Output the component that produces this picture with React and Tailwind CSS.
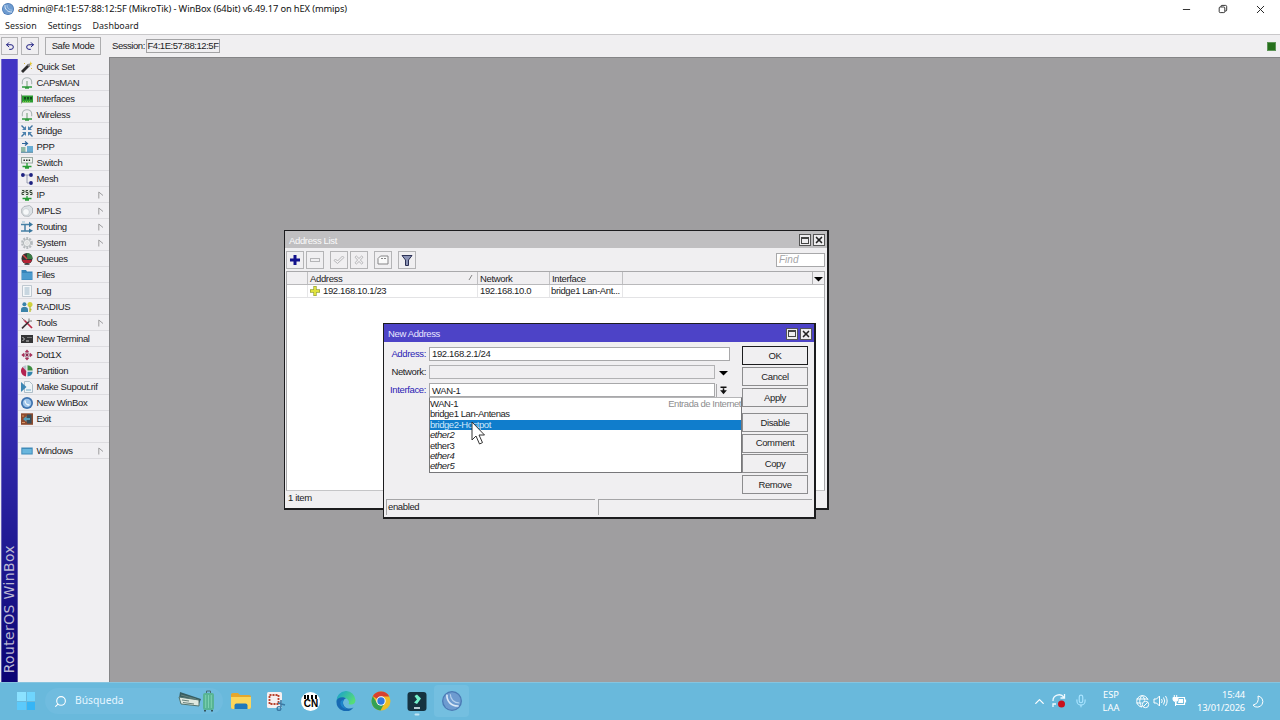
import { Minus, X, Undo2, Search, ChevronUp, Mic } from "lucide-react";

const Svg = ({ children, size = 12, className = "" }) => (
  <svg width={size} height={size} viewBox="0 0 12 12" fill="none" className={`shrink-0 ${className}`}>
    {children}
  </svg>
);

const WinBoxLogo = ({ size = 12 }) => (
  <Svg size={size}>
    <circle cx="6" cy="6" r="6" fill="#4a79b4" />
    <circle cx="6" cy="6" r="5.2" fill="#6d9bd0" />
    <path d="M3 2.2C2.6 6 5.5 9.2 10 9" stroke="#dbe9f7" strokeWidth="1" />
    <path d="M5 2C5 5 7.2 7.2 10.4 7.2" stroke="#b5d0ec" strokeWidth="0.7" />
  </Svg>
);

const Antenna = () => (
  <Svg>
    <path d="M1.3 7.2V5a4.7 4.2 0 0 1 9.4 0v2.2" stroke="#aab4b4" strokeWidth="1.1" />
    <path d="M6 4v6" stroke="#6f9c72" strokeWidth="1" />
    <path d="M1 10h10M4 11h4" stroke="#2f9b3c" strokeWidth="1.3" />
  </Svg>
);

const icons = {
  quick: (
    <Svg>
      <path d="M1 11L8 4" stroke="#2c2c2c" strokeWidth="2.8" />
      <path d="M7 5l2-2" stroke="#888" strokeWidth="2.4" />
      <path d="M9 0l.7 1.7L11.6 2l-1.5 1 .5 2-1.6-1.2" fill="#e2c52e" />
      <path d="M3 2l1 1M10 7l1 1" stroke="#d9b83a" />
    </Svg>
  ),
  antenna: <Antenna />,
  interfaces: (
    <Svg>
      <path d="M.5 1.5v9" stroke="#888" />
      <rect x="1" y="2.5" width="11" height="7" fill="#2b9c31" />
      <path d="M3 4h2v2.6H3zM6 4h2v2.6H6zM9 4h2v2.6H9z" fill="#114d1b" />
      <path d="M2 8.8h8" stroke="#9ed64d" strokeDasharray="1 1" />
    </Svg>
  ),
  bridge: (
    <Svg>
      <path d="M.5.5l4 4M11.5.5l-4 4M.5 11.5l4-4M11.5 11.5l-4-4" stroke="#3f73a1" strokeWidth="1.4" />
      <path d="M5 1v4H1zM7 1v4h4zM5 11V7H1zM7 11V7h4z" fill="#4c82ae" />
    </Svg>
  ),
  ppp: (
    <Svg>
      <path d="M1 2.5h5M4 .5l2.5 2L4 4.5" stroke="#2d659a" strokeWidth="1.2" />
      <rect x="0" y="6" width="4.5" height="5" fill="#8fb9a5" />
      <rect x="6" y="5" width="6" height="6" fill="#69add4" />
      <path d="M0 11.3h12" stroke="#53869f" />
    </Svg>
  ),
  switch: (
    <Svg>
      <rect x=".5" y=".5" width="11" height="5.5" fill="#eef3ee" stroke="#9ba9a2" />
      <path d="M2.5 3.3h7" stroke="#222" strokeWidth="1.4" strokeDasharray="1.4 1.2" />
      <path d="M6 6v4M1.5 9.5h9M4 11h4" stroke="#279d35" strokeWidth="1.3" />
    </Svg>
  ),
  mesh: (
    <Svg>
      <path d="M2 2h7M6 2v8h4" stroke="#8289a2" strokeWidth=".8" />
      <circle cx="1.9" cy="2" r="1.9" fill="#1d2180" />
      <circle cx="10" cy="2" r="1.9" fill="#1d2180" />
      <circle cx="10" cy="10" r="1.9" fill="#1d2180" />
    </Svg>
  ),
  ip: (
    <Svg>
      <rect x=".3" y=".5" width="11.4" height="6" fill="#dfe6dc" />
      <path d="M1 1.5h2v2H1v2h2M7 1.5H5v2h2v2H5M11 1.5H9v2h2v2H9" stroke="#2c3c2e" strokeWidth=".9" />
      <path d="M6 7v3M1.5 9.5h9M4 11h4" stroke="#279d35" strokeWidth="1.3" />
    </Svg>
  ),
  mpls: (
    <Svg>
      <path d="M3 1.5L8.5.5 11.5 3v5L8 11.3 3 11 .7 8V4z" fill="#dde2e6" stroke="#a5abb0" strokeWidth=".8" />
      <circle cx="5" cy="7" r="3.4" fill="#f6f8f9" stroke="#b9c0c5" strokeWidth=".6" />
    </Svg>
  ),
  routing: (
    <Svg>
      <path d="M0 3.5h9M4 3.5v7M0 10h9" stroke="#4580a5" strokeWidth="1.5" />
      <path d="M8 .8l4 2.7-4 2.7zM8 7.4l4 2.3-4 2.3z" fill="#3a779e" />
      <path d="M1 1h3" stroke="#91bdd0" />
    </Svg>
  ),
  system: (
    <Svg>
      <circle cx="6" cy="6" r="4.9" stroke="#b5babd" strokeWidth="2" strokeDasharray="2 1.1" />
      <circle cx="6" cy="6" r="3.6" fill="#eceeee" stroke="#aeb3b5" strokeWidth=".9" />
      <circle cx="6" cy="6" r="1.2" fill="#fff" stroke="#bbb" strokeWidth=".5" />
    </Svg>
  ),
  queues: (
    <Svg>
      <circle cx="6" cy="5.5" r="5.5" fill="#363332" />
      <path d="M6 6V0a5.5 5.5 0 0 1 5.5 6z" fill="#397b43" />
      <path d="M6 6L2 2" stroke="#d54242" strokeWidth="1.5" />
      <path d="M1 7h10l-2 3H3z" fill="#b42435" />
      <path d="M3.5 11.5h5" stroke="#555" />
    </Svg>
  ),
  files: (
    <Svg>
      <path d="M.5 1H5l1 1.6h5.5V11H.5z" fill="#3684b9" />
      <path d="M1 4h10v6.5H1z" fill="#4c9bce" />
    </Svg>
  ),
  log: (
    <Svg>
      <path d="M1.5.5h9v11h-9z" fill="#f4f7f9" stroke="#b1bdc6" strokeWidth=".8" />
      <path d="M3.5 3h5M3.5 5h5M3.5 7h5M3.5 9h5" stroke="#87a4ba" strokeWidth=".8" />
    </Svg>
  ),
  radius: (
    <Svg>
      <circle cx="3.4" cy="3.3" r="2" fill="#3a83a9" />
      <path d="M0 11V8.5C0 6.5 1.5 6 3.4 6S7 6.5 7 8.5V11z" fill="#3a83a9" />
      <circle cx="9" cy="3.5" r="2.5" fill="#cfd13c" />
      <path d="M9 5v6M9 8.5h1.5" stroke="#b9bd31" strokeWidth="1.3" />
    </Svg>
  ),
  tools: (
    <Svg>
      <path d="M3 3l8 8" stroke="#bb2946" strokeWidth="1.7" />
      <path d="M.8.8l3 3" stroke="#888" strokeWidth="1" />
      <path d="M1 11.3L8.5 4" stroke="#3b3135" strokeWidth="1.7" />
      <path d="M8 1.5V4h3" stroke="#999" strokeWidth="1.4" />
    </Svg>
  ),
  terminal: (
    <Svg>
      <rect x="0" y="2" width="12" height="8" fill="#343436" />
      <path d="M1.5 4l2 2-2 2M5 8h3" stroke="#ddd" strokeWidth=".9" />
      <path d="M6 4.5h5" stroke="#777" />
    </Svg>
  ),
  dot1x: (
    <Svg>
      <path d="M6 .5L8.2 3H3.8zM6 11.5L8.2 9H3.8zM.3 6L3 3.8v4.4zM11.7 6L9 3.8v4.4z" fill="#a8325b" />
      <circle cx="6" cy="6" r="2.5" stroke="#a06680" strokeWidth="1" />
      <circle cx="6" cy="6" r="1.4" fill="#8c294e" />
    </Svg>
  ),
  partition: (
    <Svg>
      <path d="M5.3 6L1.5 1.8A6 6 0 0 1 5.3.2z" fill="#b7c4cc" />
      <path d="M5.3 6L1.6 2A5.6 5.6 0 0 0 5 11.5z" fill="#b32350" />
      <path d="M6.5 5.5V.2a5.6 5.6 0 0 1 5.2 5.3z" fill="#3d8d43" />
      <path d="M6.5 6.8h5.2a5.6 5.6 0 0 1-5.2 4.7z" fill="#3484ac" />
    </Svg>
  ),
  supout: (
    <Svg>
      <path d="M3.5.5h5l3 3v8h-8z" fill="#eef4f7" stroke="#9eb1bd" strokeWidth=".8" />
      <path d="M0 1l5.5 5L0 11z" fill="#3d87b4" />
      <path d="M5 9h5" stroke="#73aac8" />
    </Svg>
  ),
  winbox: (
    <Svg>
      <circle cx="6" cy="6" r="6" fill="#3e72ae" />
      <circle cx="6" cy="6" r="4.3" fill="#9cc2e8" />
      <path d="M4 3.5C4 6 6 8 8.5 8" stroke="#f2f8fd" strokeWidth="1.3" />
    </Svg>
  ),
  exit: (
    <Svg>
      <rect x="0" y=".3" width="12" height="11.5" fill="#8e4a2d" />
      <rect x="6" y="1.5" width="4.5" height="9" fill="#374d59" />
      <path d="M2 6l3.5-3v2H9v2H5.5v2z" fill="#4f9cb9" />
      <path d="M1 3h2M1 9.5h3" stroke="#d99263" strokeWidth="1.2" />
    </Svg>
  ),
  windows: (
    <Svg>
      <rect x=".3" y="2.5" width="11.4" height="7" fill="#3f8bb9" />
      <rect x="1.3" y="4" width="9.4" height="4.5" fill="#69b6dd" />
    </Svg>
  ),
};

const menu = [
  { label: "Quick Set", icon: "quick" },
  { label: "CAPsMAN", icon: "antenna" },
  { label: "Interfaces", icon: "interfaces" },
  { label: "Wireless", icon: "antenna" },
  { label: "Bridge", icon: "bridge" },
  { label: "PPP", icon: "ppp" },
  { label: "Switch", icon: "switch" },
  { label: "Mesh", icon: "mesh" },
  { label: "IP", icon: "ip", sub: true },
  { label: "MPLS", icon: "mpls", sub: true },
  { label: "Routing", icon: "routing", sub: true },
  { label: "System", icon: "system", sub: true },
  { label: "Queues", icon: "queues" },
  { label: "Files", icon: "files" },
  { label: "Log", icon: "log" },
  { label: "RADIUS", icon: "radius" },
  { label: "Tools", icon: "tools", sub: true },
  { label: "New Terminal", icon: "terminal" },
  { label: "Dot1X", icon: "dot1x" },
  { label: "Partition", icon: "partition" },
  { label: "Make Supout.rif", icon: "supout" },
  { label: "New WinBox", icon: "winbox" },
  { label: "Exit", icon: "exit" },
  {},
  { label: "Windows", icon: "windows", sub: true },
];

function TitleBar() {
  return (
    <header className="h-[18px] bg-white flex items-center justify-between pl-0.5 pr-[13px]">
      <div className="flex items-center gap-1">
        <WinBoxLogo />
        <span className="font-['Noto_Sans',sans-serif] text-[9.3px] leading-none tracking-[-0.11px] text-[#111] whitespace-nowrap">
          admin@F4:1E:57:88:12:5F (MikroTik) - WinBox (64bit) v6.49.17 on hEX (mmips)
        </span>
      </div>
      <div className="flex items-center gap-[26px] text-[#222]">
        <Minus size={11} strokeWidth={2} />
        <svg width="10" height="10" viewBox="0 0 10 10" fill="none" stroke="currentColor" strokeWidth=".9">
          <rect x="1.2" y="3" width="5.6" height="5.6" rx="1" />
          <path d="M3 3V2.2Q3 1.4 3.8 1.4H7.5Q8.7 1.4 8.7 2.6V6Q8.7 7 7.8 7H6.9" />
        </svg>
        <X size={13} strokeWidth={1.8} />
      </div>
    </header>
  );
}

function MainToolbar() {
  return (
    <div className="h-[23px] bg-[#f0eff1] border-t border-[#c9c8ca] flex items-center pl-px">
      <button className="w-[17px] h-[18px] border border-[#b5b5b7] flex items-center justify-center text-[#1b1b80]">
        <Undo2 size={10} strokeWidth={2.4} />
      </button>
      <button className="ml-[3px] w-[18px] h-[18px] border border-[#b5b5b7] flex items-center justify-center text-[#1b1b80]">
        <Undo2 size={10} strokeWidth={2.4} className="-scale-x-100" />
      </button>
      <button className="ml-[6px] w-[56px] h-[18px] border border-[#adadaf] leading-none">Safe Mode</button>
      <span className="ml-[11px] w-[33px] whitespace-nowrap tracking-[-0.45px]">Session:</span>
      <span className="ml-px w-[74px] h-[14px] border border-[#a3a3a5] leading-[12px] text-center tracking-[-0.45px] whitespace-nowrap">
        F4:1E:57:88:12:5F
      </span>
      <span className="ml-auto mr-1 size-[9px] bg-[#26701c] border border-[#5e9458]" />
    </div>
  );
}

function Sidebar() {
  return (
    <aside className="w-[110px] bg-[#f0eff2] border-r border-[#858587] flex pl-px pt-[2px]">
      <div className="w-[17px] bg-gradient-to-b from-[#4135c4] from-45% to-[#0c0474] flex items-end justify-center pb-[9px] border-x border-[#c5c3e2]/40">
        <span className="[writing-mode:vertical-rl] rotate-180 font-['DejaVu_Sans',sans-serif] text-[14px] leading-[15px] tracking-[0.35px] text-[#b9b7d3] whitespace-nowrap">
          RouterOS WinBox
        </span>
      </div>
      <nav className="flex-1">
        {menu.map((item, i) => (
          <div key={i} className="h-4 flex items-center border-b border-[#dddce0] pl-[3px] pr-[5px]">
            {item.label && (
              <>
                {icons[item.icon]}
                <span className="ml-[3.5px] pt-[2px] whitespace-nowrap">{item.label}</span>
              </>
            )}
            {item.sub && (
              <svg width="6" height="8" viewBox="0 0 6 8" fill="none" className="ml-auto">
                <path d="M.8 7.5V1L5 4.5" stroke="#949496" strokeWidth=".9" />
              </svg>
            )}
          </div>
        ))}
      </nav>
    </aside>
  );
}

function WindowButtons() {
  return (
    <div className="flex gap-[2px]">
      <button className="size-3 bg-[#eeedef] border border-[#555] flex items-center justify-center">
        <span className="w-[8px] h-[7px] border border-t-2 border-[#444]" />
      </button>
      <button className="size-3 bg-[#eeedef] border border-[#555] flex items-center justify-center">
        <X size={10} strokeWidth={4} className="text-[#222] shrink-0" />
      </button>
    </div>
  );
}

function ToolButton({ children, className = "" }) {
  return (
    <button className={`size-[18px] border border-[#b4b4b6] flex items-center justify-center ${className}`}>
      {children}
    </button>
  );
}

function AddressList() {
  return (
    <section className="absolute left-[174px] top-[172px] w-[545px] h-[280px] bg-[#f0eff1] border border-r-2 border-b-2 border-[#1c1c1e] flex flex-col pl-px pr-[2px]">
      <div className="h-[17px] -ml-px -mr-[2px] bg-[#c0bfc1] flex items-center justify-between pl-[4px] pr-[2px] pt-px text-[#fafafa]">
        <span className="pt-[2px]">Address List</span>
        <WindowButtons />
      </div>
      <div className="h-[23px] flex items-center">
        <ToolButton>
          <Svg>
            <path d="M6 1v10M1 6h10" stroke="#11118c" strokeWidth="3" />
          </Svg>
        </ToolButton>
        <ToolButton className="ml-[2px]">
          <Svg>
            <rect x="1.5" y="4.5" width="9" height="3" stroke="#b5b5b7" />
          </Svg>
        </ToolButton>
        <ToolButton className="ml-[6px]">
          <Svg>
            <path d="M1 6.5L2.5 5l2 2 5-5L11 3.5l-6.500 6z" stroke="#b0b0b2" strokeWidth=".9" />
          </Svg>
        </ToolButton>
        <ToolButton className="ml-[2px]">
          <Svg>
            <path
              d="M2 3.2L3.4 2 6 4.5 8.6 2 10 3.2 7.4 6 10 8.8 8.6 10 6 7.5 3.4 10 2 8.8 4.6 6z"
              stroke="#b0b0b2"
              strokeWidth=".9"
            />
          </Svg>
        </ToolButton>
        <ToolButton className="ml-[6px]">
          <Svg>
            <path d="M1 4.5L3.5 2H11v8H1z" fill="#fafafa" stroke="#858587" />
            <path d="M4 4.5h5" stroke="#858587" strokeDasharray="2 1" />
          </Svg>
        </ToolButton>
        <ToolButton className="ml-[6px]">
          <Svg>
            <path d="M1 1.5h10L7.5 6v5.5h-3V6z" fill="#8b93b5" stroke="#2c3155" />
          </Svg>
        </ToolButton>
        <span className="ml-auto w-[49px] h-[14px] bg-white border border-[#a8a8aa] leading-[12px] pl-[2px] italic text-[10px] text-[#a5a5a7] tracking-normal">
          Find
        </span>
      </div>
      <div className="flex-1 bg-white border border-[#a9a9ab] border-b-[#c5c5c7]">
        <div className="h-[13px] bg-[#f0eff1] border-b border-[#b9b9bb] flex leading-[14px]">
          <span className="w-[21px] border-r border-[#c0c0c2]" />
          <span className="w-[170px] border-r border-[#c0c0c2] pl-[2px] pr-1 flex justify-between">
            Address
            <svg width="5" height="7" viewBox="0 0 5 7" className="mt-[2px]">
              <path d="M1 6L4 1" stroke="#777" strokeWidth=".9" />
            </svg>
          </span>
          <span className="w-[72px] border-r border-[#c0c0c2] pl-[2px]">Network</span>
          <span className="w-[73px] border-r border-[#c0c0c2] pl-[2px]">Interface</span>
          <span className="flex-1 border-r border-[#b0b0b2]" />
          <span className="w-[11px] flex items-center justify-center">
            <Svg size={9}>
              <path d="M0 4h12L6 10z" fill="#000" />
            </Svg>
          </span>
        </div>
        <div className="h-[13px] border-b border-[#e3e3e5] flex leading-[12px]">
          <span className="w-[21px] border-r border-[#e6e6e8]" />
          <span className="w-[170px] border-r border-[#e6e6e8] pl-[2px] flex items-center gap-[3px]">
            <Svg size={10}>
              <path d="M6 0v12M0 6h12" stroke="#9ba637" strokeWidth="4" />
              <path d="M6 1v10M1 6h10" stroke="#dfe23e" strokeWidth="2.4" />
            </Svg>
            192.168.10.1/23
          </span>
          <span className="w-[72px] border-r border-[#e6e6e8] pl-[2px]">192.168.10.0</span>
          <span className="w-[73px] border-r border-[#e6e6e8] pl-px tracking-[-0.38px] whitespace-nowrap">
            bridge1 Lan-Ant...
          </span>
        </div>
      </div>
      <div className="h-[17px] pl-[2px] leading-[14px]">1 item</div>
    </section>
  );
}

const interfaces = [
  { name: "WAN-1", note: "Entrada de Internet" },
  { name: "bridge1 Lan-Antenas" },
  { name: "bridge2-Hostpot", active: true },
  { name: "ether2", off: true },
  { name: "ether3" },
  { name: "ether4", off: true },
  { name: "ether5", off: true },
];

function InterfaceDropdown() {
  return (
    <ul className="absolute left-[45px] top-[73px] w-[313px] h-[76px] bg-white border border-[#77777a] border-t-[#b5b5b7] pt-px tracking-[-0.45px]">
      {interfaces.map((row) => (
        <li
          key={row.name}
          className={`h-[10.4px] leading-[10.4px] flex justify-between whitespace-nowrap ${
            row.active ? "bg-[#107dcc] text-[#cfe8fa]" : "text-[#1c1c1e]"
          } ${row.off ? "italic" : ""}`}
        >
          <span>{row.name}</span>
          {row.note && <span className="text-[#8d8d8f]">{row.note}</span>}
        </li>
      ))}
    </ul>
  );
}

function DialogButton({ children, main }) {
  return (
    <button
      className={`h-[19px] w-full border leading-none ${
        main ? "border-[#1c1c1e]" : "border-[#8c8c8e]"
      }`}
    >
      {children}
    </button>
  );
}

function FieldRow({ label, required, children }) {
  return (
    <div className="h-[14px] flex items-center">
      <label className={`w-[39px] leading-[14px] text-right ${required ? "text-[#2b22b4]" : ""}`}>{label}</label>
      {children}
    </div>
  );
}

function NewAddress() {
  return (
    <section className="absolute left-[273px] top-[265px] w-[433px] h-[196px] bg-[#f0eff1] border border-r-2 border-b-2 border-[#1c1c1e] flex flex-col">
      <div className="h-[18px] bg-[#4d43c7] flex items-center justify-between pl-1 pr-[2px] pt-px text-[#e8e6ff]">
        <span className="pt-px">New Address</span>
        <WindowButtons />
      </div>
      <div className="h-[156px] flex pl-[3px] pr-[6px] pt-[4px]">
        <div className="flex flex-col gap-1 pt-px">
          <FieldRow label="Address:" required>
            <span className="ml-[3px] w-[301px] h-[14px] bg-white border border-[#a8a8aa] leading-[12px] pl-[2px]">
              192.168.2.1/24
            </span>
          </FieldRow>
          <FieldRow label="Network:">
            <span className="ml-[3px] w-[286px] h-[14px] border border-[#b2b2b4]" />
            <Svg size={9} className="ml-1">
              <path d="M0 4h12L6 10z" fill="#000" />
            </Svg>
          </FieldRow>
          <FieldRow label="Interface:" required>
            <span className="ml-[3px] w-[286px] h-[14px] bg-white border border-[#a8a8aa] leading-[13px] pl-[2px]">
              WAN-1
            </span>
            <span className="ml-px w-[13px] h-[13px] border-l border-[#a8a8aa] flex items-center justify-center">
              <Svg size={9}>
                <path d="M2 1.5h8M6 3v4" stroke="#111" strokeWidth="2" />
                <path d="M1.5 5.5h9L6 11z" fill="#111" />
              </Svg>
            </span>
          </FieldRow>
        </div>
        <div className="ml-auto w-[66px] h-[148px] flex flex-col justify-between">
          <div className="flex flex-col gap-[2px]">
            <DialogButton main>OK</DialogButton>
            <DialogButton>Cancel</DialogButton>
            <DialogButton>Apply</DialogButton>
          </div>
          <div className="h-[81px] flex flex-col justify-between">
            <DialogButton>Disable</DialogButton>
            <DialogButton>Comment</DialogButton>
            <DialogButton>Copy</DialogButton>
            <DialogButton>Remove</DialogButton>
          </div>
        </div>
      </div>
      <div className="flex-1 flex gap-[3px] px-[2px] pb-[2px] pt-px leading-[14px]">
        <span className="w-[209px] border-t border-l border-[#a5a5a7] pl-px">enabled</span>
        <span className="flex-1 border-t border-l border-[#a5a5a7]" />
      </div>
      <InterfaceDropdown />
    </section>
  );
}

function Cursor() {
  return (
    <svg width="14" height="24" viewBox="0 0 14 24" className="absolute left-[361px] top-[363px]">
      <path d="M1 1v18l4-4 3.5 8 3-1.4L8 14h5.5z" fill="#fff" stroke="#333" strokeWidth="1" />
    </svg>
  );
}

const apps = [
  <svg width="22" height="20" viewBox="0 0 22 20">
    <path d="M1 3.5Q1 2 3 2h5l2 2h9q2 0 2 2v10q0 1.5-2 1.5H3q-2 0-2-1.5z" fill="#e5a72c" />
    <path d="M1 6h20v10q0 2-2 2H3q-2 0-2-2z" fill="#fbd65b" />
    <path d="M4.5 18v-3.5q0-2 2-2h9q2 0 2 2V18z" fill="#1f78bb" />
  </svg>,
  <svg width="22" height="22" viewBox="0 0 22 22" fill="none">
    <rect x="2" y="2" width="15" height="16" rx="1.5" fill="#f6eff0" />
    <rect x="4.5" y="5" width="9" height="9" stroke="#b9422d" strokeWidth="1.8" strokeDasharray="2 1" />
    <path d="M13 13l7 2M16 10v7" stroke="#3979a4" strokeWidth="1.6" />
    <circle cx="14" cy="18.5" r="1.9" stroke="#3979a4" strokeWidth="1.3" />
  </svg>,
  <div className="size-[19px] rounded-full bg-white text-black flex flex-col items-center justify-center overflow-hidden">
    <span className="w-[13px] h-[4px] border-y-2 border-dotted border-black" />
    <span className="font-['Liberation_Sans',sans-serif] text-[10px] font-bold leading-[9px] tracking-normal">CN</span>
  </div>,
  <svg width="20" height="20" viewBox="0 0 20 20">
    <defs>
      <linearGradient id="edge" x1="0" y1="0" x2="1" y2=".6">
        <stop stopColor="#159bd5" />
        <stop offset="1" stopColor="#56dd77" />
      </linearGradient>
    </defs>
    <path d="M.5 10A9.5 9.5 0 0 1 19.5 9c0 4-3.5 5.5-7 4 .8-1 .8-3-.8-4.5C9 6 4 6 .5 10z" fill="url(#edge)" />
    <path d="M.5 10C1 6.5 7 5 10 7.5 6.5 8.5 6 13 9 16c2.5 2 6 2 8.500.5A9.5 9.5 0 0 1 .5 10z" fill="#1669b3" />
    <path d="M8 8.5c-2 3-1.5 7 3 9.5-5-.2-8-5-6-8 1-1 2-1.5 3-1.5z" fill="#1c84cb" />
  </svg>,
  <svg width="20" height="20" viewBox="0 0 20 20">
    <circle cx="10" cy="10" r="9.5" fill="#eebe25" />
    <path d="M10 10L1.8 5.2A9.5 9.5 0 0 1 18.3 5.5H10z" fill="#d7402f" />
    <path d="M1.8 5.2A9.5 9.5 0 0 0 9.5 19.5L13.5 12 6 12z" fill="#33a154" />
    <circle cx="10" cy="10" r="4.7" fill="#fff" />
    <circle cx="10" cy="10" r="3.7" fill="#3279dd" />
  </svg>,
  <svg width="20" height="26" viewBox="0 0 20 26" className="mt-[5px]">
    <rect x=".5" y="1" width="19" height="19" rx="3" fill="#163240" />
    <path d="M7.5 5L10 3.5l4 4-4 5.5-3-1.5 3-3z" fill="#73f0cb" />
    <rect x="7" y="16" width="6" height="2" fill="#b9ccd4" />
    <rect x="7.5" y="22.5" width="5" height="2" rx="1" fill="#c2e6f5" />
  </svg>,
  <WinBoxLogo size={20} />,
];

function Taskbar() {
  return (
    <footer className="h-[38px] pb-px bg-[#69b9dc] border-t border-[#86c4df] flex items-center justify-between pl-[17px] pr-[14px] font-['Noto_Sans',sans-serif] tracking-normal text-white">
      <div className="flex items-center">
        <div className="grid grid-cols-2 gap-px size-[18px]">
          <span className="bg-[#8be2ff]" />
          <span className="bg-[#6fd5fd]" />
          <span className="bg-[#5ccafb]" />
          <span className="bg-[#36b5f5]" />
        </div>
        <div className="ml-[10px] w-[178px] h-[26px] rounded-full bg-[#70bcdf] flex items-center pl-[9px] pr-[8px]">
          <Search size={13} strokeWidth={2} className="-scale-x-100 shrink-0" />
          <span className="ml-[8px] text-[10.3px] text-[#e6f6ff]">Búsqueda</span>
          <svg width="38" height="22" viewBox="0 0 38 22" className="ml-auto shrink-0" fill="none">
            <path d="M3 2l21 7-2 5L2 9z" fill="#365d60" />
            <path d="M2 7l20 3v6L4 14z" fill="#dfe8df" stroke="#53746f" />
            <path d="M5 10l7 1M6 12.500l11 1.5M4 5l15 4" stroke="#67817b" strokeWidth="1.2" />
            <path d="M29.5 4V1h4v3" stroke="#496e74" />
            <rect x="26" y="3" width="11" height="17" rx="2" fill="#58b494" />
            <path d="M28.7 5v13M31.5 5v13M34.3 5v13" stroke="#7dd2b1" />
            <path d="M27 20.8h2M34 20.8h2" stroke="#34545c" strokeWidth="1.4" />
          </svg>
        </div>
        <div className="flex">
          {apps.map((app, i) => (
            <div
              key={i}
              className={`w-[35.2px] h-8 flex items-center justify-center rounded ${
                i === 6 ? "bg-[#74bfe0]" : ""
              }`}
            >
              {app}
            </div>
          ))}
        </div>
      </div>
      <div className="flex items-center text-[9.3px] leading-[13px]">
        <ChevronUp size={15} strokeWidth={2} />
        <svg width="16" height="16" viewBox="0 0 16 16" fill="none" className="ml-[4px]">
          <path d="M2 8a6 6 0 0 1 11-3.5M13.5 1v4h-4M2 14v-3h3" stroke="#f1faff" strokeWidth="1.3" />
          <circle cx="10.5" cy="11" r="3.5" fill="#c9101d" />
        </svg>
        <Mic size={14} strokeWidth={2} className="ml-[7px] text-[#a9e4ff]" />
        <div className="ml-[11px] w-6 text-center">
          ESP
          <br />
          LAA
        </div>
        <svg width="15" height="15" viewBox="0 0 15 15" fill="none" stroke="white" className="ml-[12px]">
          <path d="M13 6A5.7 5.7 0 1 0 7 13M1.5 5h11M1.5 9h5M7 1.5C4 5 4 9.5 7 13M7 1.5c2 2 2.5 3 2.5 5" />
          <circle cx="10.5" cy="10.5" r="3.2" />
          <path d="M8.3 12.7l4.4-4.4" />
        </svg>
        <svg width="15" height="14" viewBox="0 0 15 14" fill="none" stroke="white" className="ml-[3px]">
          <path d="M1 5h2.5l3-3v10l-3-3H1zM8.5 5q1.5 2 0 4M10.5 3.5q2.5 3.5 0 7M12.5 2q3.3 5 0 10" />
        </svg>
        <svg width="15" height="14" viewBox="0 0 15 14" fill="none" stroke="white" className="ml-[4px]">
          <path d="M5 3.5h7.5v7H4V8M13.5 5.5v3" strokeWidth="1.2" />
          <path d="M1 3.5h5v2q0 2-2.5 2T1 5.5zM2.3 1v2M4.7 1v2M3.5 8v4" fill="white" />
          <path d="M7 5h4v4H6z" fill="white" stroke="none" />
        </svg>
        <div className="w-[58px] text-right whitespace-nowrap tracking-[-0.15px]">
          15:44
          <br />
          13/01/2026
        </div>
        <svg width="12" height="13" viewBox="0 0 12 13" fill="none" stroke="white" className="ml-[7px] mr-[2px]">
          <path d="M6 1a5.6 5.6 0 1 1-5 9.2Q7.5 8.5 6 1z" strokeLinejoin="round" />
        </svg>
      </div>
    </footer>
  );
}

export default function App() {
  return (
    <div className="w-[1280px] h-[720px] overflow-hidden flex flex-col font-['Liberation_Sans',sans-serif] text-[9.5px] tracking-[-0.36px] text-[#1c1c1e]">
      <TitleBar />
      <div className="h-[16px] bg-white flex items-center gap-[11px] pl-[5px] font-['Noto_Sans',sans-serif] text-[8.9px] tracking-[0.02px]">
        <span>Session</span>
        <span>Settings</span>
        <span>Dashboard</span>
      </div>
      <MainToolbar />
      <div className="h-[625px] flex">
        <Sidebar />
        <main className="relative flex-1 bg-[#9f9ea0] border-t border-[#858587]">
          <AddressList />
          <NewAddress />
          <Cursor />
        </main>
      </div>
      <Taskbar />
    </div>
  );
}
